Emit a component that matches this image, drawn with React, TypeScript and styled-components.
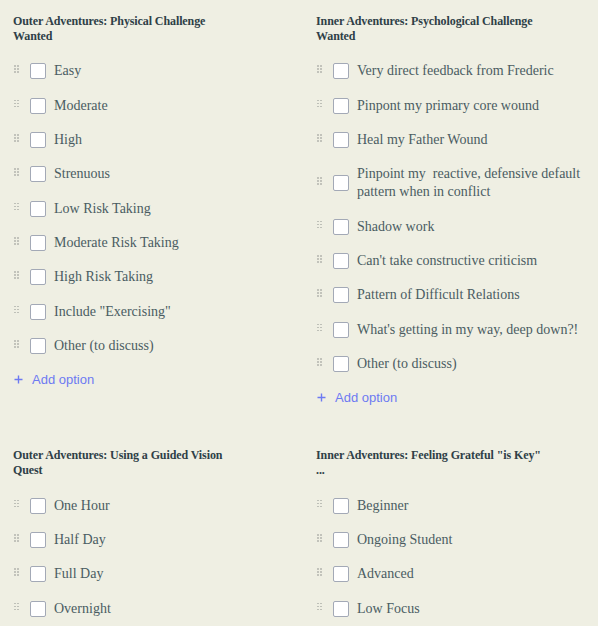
import { FC } from "react";
import styled, { createGlobalStyle } from "styled-components";

const GlobalStyle = createGlobalStyle`
  html, body {
    margin: 0;
    padding: 0;
    background: #efefe3;
  }
`;

const Page = styled.div`
  display: grid;
  grid-template-columns: 303px 1fr;
  row-gap: 41px;
  padding: 14px 0 0;
  min-height: 626px;
  box-sizing: border-box;
  background: #efefe3;
`;

const Section = styled.div`
  display: flex;
  flex-direction: column;
  padding-left: 13px;
  padding-right: 8px;
`;

const Title = styled.h3`
  margin: 0 0 10px;
  font-family: "Liberation Serif", "DejaVu Serif", serif;
  font-weight: 700;
  font-size: 12px;
  line-height: 15px;
  color: #2e4047;
  white-space: nowrap;
  letter-spacing: -0.1px;
`;

const Row = styled.div`
  display: flex;
  align-items: center;
  padding: 8.2px 0;
`;

const Handle = styled.span`
  display: grid;
  grid-template-columns: repeat(2, 2px);
  grid-auto-rows: 2px;
  gap: 1px;
  width: 5px;
  margin: -4px 11px 0 1px;
  flex-shrink: 0;
  span {
    width: 1.6px;
    height: 1.6px;
    border-radius: 50%;
    background: #b8bab2;
  }
`;

const Box = styled.span`
  width: 14px;
  height: 14px;
  flex-shrink: 0;
  background: #ffffff;
  border: 1px solid #a3a9b6;
  border-radius: 2px;
  margin-right: 8px;
`;

const Label = styled.span`
  font-family: "Liberation Serif", "DejaVu Serif", serif;
  font-size: 14px;
  line-height: 18px;
  color: #4a5c62;
  white-space: pre-wrap;
`;

const AddOption = styled.div`
  display: flex;
  align-items: center;
  gap: 9px;
  height: 20px;
  margin-top: 6px;
  padding-left: 1px;
  font-family: "Liberation Sans", Arial, sans-serif;
  font-size: 13px;
  color: #6d7af2;
`;

type Group = { title: string[]; options: string[]; add?: boolean };

const groups: Group[] = [
  {
    title: ["Outer Adventures: Physical Challenge", "Wanted"],
    options: [
      "Easy",
      "Moderate",
      "High",
      "Strenuous",
      "Low Risk Taking",
      "Moderate Risk Taking",
      "High Risk Taking",
      "Include \"Exercising\"",
      "Other (to discuss)",
    ],
    add: true,
  },
  {
    title: ["Inner Adventures: Psychological Challenge", "Wanted"],
    options: [
      "Very direct feedback from Frederic",
      "Pinpont my primary core wound",
      "Heal my Father Wound",
      "Pinpoint my  reactive, defensive default pattern when in conflict",
      "Shadow work",
      "Can't take constructive criticism",
      "Pattern of Difficult Relations",
      "What's getting in my way, deep down?!",
      "Other (to discuss)",
    ],
    add: true,
  },
  {
    title: ["Outer Adventures: Using a Guided Vision", "Quest"],
    options: ["One Hour", "Half Day", "Full Day", "Overnight"],
  },
  {
    title: ["Inner Adventures: Feeling Grateful \"is Key\"", "..."],
    options: ["Beginner", "Ongoing Student", "Advanced", "Low Focus"],
  },
];

const Plus: FC = () => (
  <svg width="9" height="9" viewBox="0 0 9 9">
    <path d="M4.5 0.5v8M0.5 4.5h8" stroke="#6d7af2" strokeWidth="1.4" />
  </svg>
);

export default function App() {
  return (
    <>
      <GlobalStyle />
      <Page>
        {groups.map((g) => (
          <Section key={g.title[0]}>
            <Title>
              {g.title[0]}
              <br />
              {g.title[1]}
            </Title>
            {g.options.map((o) => (
              <Row key={o}>
                <Handle>
                  {Array.from({ length: 6 }).map((_, i) => (
                    <span key={i} />
                  ))}
                </Handle>
                <Box />
                <Label>{o}</Label>
              </Row>
            ))}
            {g.add && (
              <AddOption>
                <Plus />
                Add option
              </AddOption>
            )}
          </Section>
        ))}
      </Page>
    </>
  );
}
